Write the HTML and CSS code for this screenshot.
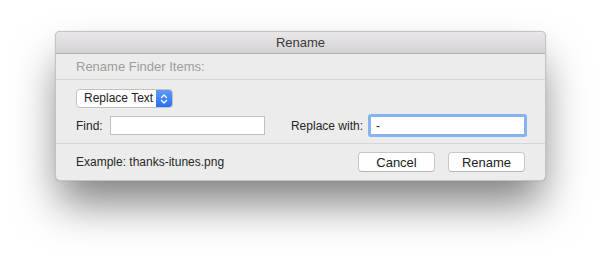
FILE: index.html
```html
<!DOCTYPE html>
<html lang="en">
<head>
    <meta charset="UTF-8">
    <title>Rename</title>
    <link rel="stylesheet" href="styles.css">
</head>
<body>
    <div class="window">
        <div class="titlebar">Rename</div>
        <div class="section-head">Rename Finder Items:</div>
        <div class="content">
            <div class="popup">
                <span class="popup-label">Replace Text</span>
                <span class="popup-arrows">
                    <svg width="8" height="12" viewBox="0 0 8 12">
                        <path d="M1.5 4.5 L4 2 L6.5 4.5 M1.5 7.5 L4 10 L6.5 7.5" fill="none" stroke="#fff" stroke-width="1.3" stroke-linecap="round" stroke-linejoin="round"/>
                    </svg>
                </span>
            </div>
            <div class="fields">
                <label class="field find-field">
                    <span>Find:</span>
                    <input type="text" class="find-input">
                </label>
                <label class="field">
                    <span>Replace with:</span>
                    <input type="text" class="replace-input focused" value="-">
                </label>
            </div>
        </div>
        <div class="footer">
            <span class="example">Example: thanks-itunes.png</span>
            <div class="buttons">
                <button class="btn">Cancel</button>
                <button class="btn">Rename</button>
            </div>
        </div>
    </div>
</body>
</html>
```

FILE: styles.css
```css
* {
    margin: 0;
    padding: 0;
    box-sizing: border-box;
}

html {
    min-height: 260px;
    background: #ffffff;
}

body {
    min-height: 260px;
    font-family: 'Liberation Sans', Arial, sans-serif;
    font-size: 12px;
    color: #262626;
    padding: 31px 0 0 55px;
}

.window {
    width: 491px;
    height: 150px;
    background: #ececec;
    border: 1px solid #c4c4c4;
    border-radius: 5px;
    overflow: hidden;
    box-shadow: 0 26px 44px -4px rgba(0, 0, 0, 0.5), 0 0 1px rgba(0, 0, 0, 0.3);
}

.titlebar {
    height: 22px;
    line-height: 21px;
    text-align: center;
    font-size: 13px;
    color: #3a3a3a;
    background: linear-gradient(#e9e7e9, #d4d2d4);
    border-bottom: 1px solid #b3b1b3;
}

.section-head {
    height: 26px;
    line-height: 26px;
    padding-left: 20px;
    font-size: 13px;
    color: #9d9d9d;
    border-bottom: 1px solid #d6d6d6;
}

.content {
    height: 64px;
    padding: 9px 20px 0 20px;
    border-bottom: 1px solid #d6d6d6;
}

.popup {
    display: flex;
    width: 97px;
    height: 19px;
    border: 1px solid #c2c2c2;
    border-radius: 4px;
    background: #ffffff;
    overflow: hidden;
}

.popup-label {
    flex: 1;
    white-space: nowrap;
    line-height: 17px;
    padding-left: 7px;
    color: #222;
}

.popup-arrows {
    width: 16px;
    display: flex;
    align-items: center;
    justify-content: center;
    background: linear-gradient(#5a9bf9, #2b6ef0);
}

.fields {
    display: flex;
    justify-content: space-between;
    margin-top: 8px;
}

.field {
    display: flex;
    align-items: center;
    gap: 7px;
    white-space: nowrap;
}

.field input {
    height: 19px;
    border: 1px solid #c0c0c0;
    background: #ffffff;
    font-family: inherit;
    font-size: 12px;
    padding-left: 5px;
    outline: none;
    color: #222;
}

.find-input {
    width: 155px;
}

.replace-input {
    width: 155px;
}

.replace-input.focused {
    border-color: #8ab2e8;
    box-shadow: 0 0 0 2px #86b4f2;
    border-radius: 1px;
}

.footer {
    display: flex;
    justify-content: space-between;
    align-items: center;
    height: 36px;
    padding: 0 20px;
}

.buttons {
    display: flex;
    gap: 13px;
}

.btn {
    width: 77px;
    height: 20px;
    border: 1px solid #c6c6c6;
    border-bottom-color: #b4b4b4;
    border-radius: 4px;
    background: #ffffff;
    font-family: inherit;
    font-size: 13px;
    color: #222;
}
```
